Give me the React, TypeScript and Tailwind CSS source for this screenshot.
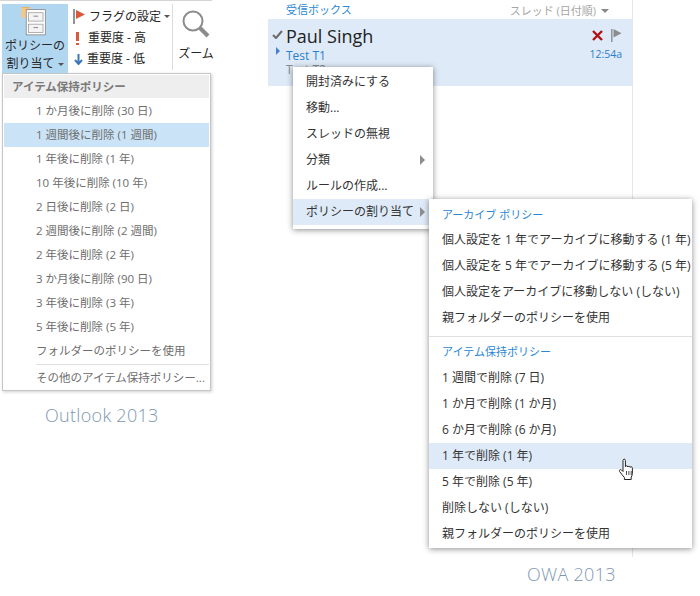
import { Fragment } from 'react';

const jp = 'font-["Open_Sans","Noto_Sans_CJK_JP",sans-serif]';

const outlookItems = [
  '1 か月後に削除 (30 日)',
  '1 週間後に削除 (1 週間)',
  '1 年後に削除 (1 年)',
  '10 年後に削除 (10 年)',
  '2 日後に削除 (2 日)',
  '2 週間後に削除 (2 週間)',
  '2 年後に削除 (2 年)',
  '3 か月後に削除 (90 日)',
  '3 年後に削除 (3 年)',
  '5 年後に削除 (5 年)',
  'フォルダーのポリシーを使用',
];

const contextItems = ['開封済みにする', '移動...', 'スレッドの無視', '分類', 'ルールの作成...', 'ポリシーの割り当て'];

const archiveItems = [
  '個人設定を 1 年でアーカイブに移動する (1 年)',
  '個人設定を 5 年でアーカイブに移動する (5 年)',
  '個人設定をアーカイブに移動しない (しない)',
  '親フォルダーのポリシーを使用',
];

const retentionItems = [
  '1 週間で削除 (7 日)',
  '1 か月で削除 (1 か月)',
  '6 か月で削除 (6 か月)',
  '1 年で削除 (1 年)',
  '5 年で削除 (5 年)',
  '削除しない (しない)',
  '親フォルダーのポリシーを使用',
];

const Cabinet = () => (
  <svg width="36" height="38" viewBox="0 0 36 38" className="block">
    <path d="M0 0h12L6 8 0 0z" fill="#e9b565" />
    <path d="M0 1v13h12V2z" fill="#f2c98a" />
    <rect x="6.5" y="3.5" width="25" height="33" fill="#fff" stroke="#808080" />
    <rect x="9.5" y="7.5" width="19" height="11" fill="#f4f4f4" stroke="#9a9a9a" />
    <rect x="9.5" y="22.5" width="19" height="11" fill="#f4f4f4" stroke="#9a9a9a" />
    <path d="M16 12h6M16 27h6" stroke="#666" />
  </svg>
);

const Chevron = () => <span className="inline-block border-x-[3px] border-t-[3px] border-x-transparent border-t-[#555]" />;

const SubArrow = () => <span className="border-y-[5px] border-l-[5px] border-y-transparent border-l-[#8c8c8c]" />;

const Hand = () => (
  <svg width="18" height="24" viewBox="0 0 18 24" className="absolute left-[189px] top-[259px]">
    <path
      d="M5 2.5c0-1.8 2.4-1.8 2.4 0v6.2c.3-1.3 2.3-1.2 2.4.3.4-1.2 2.2-1 2.3.4.5-1 2.3-.8 2.3.8v5.3c0 1.7-.8 2.6-1.2 3.6v2.4H6.4v-2c-1.4-1.6-3-3.6-4.8-6-.9-1.4.8-2.6 1.9-1.5L5 13.5z"
      fill="#fff"
      stroke="#222"
      strokeWidth="1"
      strokeLinejoin="round"
    />
    <path d="M8.5 13v4M10.9 13v4M13.2 13v4" stroke="#222" strokeWidth=".8" />
  </svg>
);

export default function App() {
  return (
    <div className={`${jp} relative w-[700px] h-[596px] overflow-hidden bg-white flex`}>
      {/* Outlook 2013 */}
      <div className="w-[268px] shrink-0">
        <div className="h-px w-[212px] bg-[#d4d4d4]" />
        <div className="flex h-[72px] pt-[3px] pl-[2px] relative">
          <div className="w-[66px] h-[69px] bg-[#b1d6f0] flex flex-col items-center pt-[3px] text-[12px] leading-[18px] text-[#262626]">
            <Cabinet />
            <span className="mt-[1px] whitespace-nowrap">ポリシーの</span>
            <span className="whitespace-nowrap flex items-center gap-[3px]">割り当て <Chevron /></span>
          </div>
          <div className="w-[105px] flex flex-col pl-[5px] pt-[2px] text-[12px] text-[#262626] border-r border-[#dcdcdc] h-[66px]">
            <div className="flex items-center h-[22px] gap-[3px] whitespace-nowrap">
              <svg width="13" height="15" viewBox="0 0 13 15"><path d="M1 0v15" stroke="#666" strokeWidth="1.4" /><path d="M3 1l9 4.5-9 4.5z" fill="#d9593c" /></svg>
              <span>フラグの設定</span>
              <Chevron />
            </div>
            <div className="flex items-center h-[23px] gap-[9px] whitespace-nowrap pl-[3px]">
              <span className="w-[3px] h-[13px] flex flex-col justify-between items-center">
                <span className="w-[3px] h-[9px] bg-[#d9593c]" />
                <span className="w-[3px] h-[2px] bg-[#d9593c]" />
              </span>
              <span>重要度 - 高</span>
            </div>
            <div className="flex items-center h-[22px] gap-[4px] whitespace-nowrap pl-[1px]">
              <svg width="9" height="11" viewBox="0 0 9 11"><path d="M4.5 0v9M1 6l3.5 4L8 6" fill="none" stroke="#3d78b8" strokeWidth="2" /></svg>
              <span>重要度 - 低</span>
            </div>
          </div>
          <div className="w-[46px] flex flex-col items-center pt-[5px] text-[12px] text-[#262626]">
            <svg width="30" height="30" viewBox="0 0 30 30"><circle cx="12" cy="12" r="9.5" fill="none" stroke="#8c8c8c" strokeWidth="2" /><path d="M19 19l8 8" stroke="#8c8c8c" strokeWidth="4" /></svg>
            <span className="mt-[6px] whitespace-nowrap">ズーム</span>
          </div>
        </div>

        <div className="ml-[2px] w-[209px] h-[318px] bg-white border border-[#c6c6c6] shadow-[1px_1px_3px_rgba(0,0,0,0.2)] p-px text-[11.5px] text-[#6d6d6d]">
          <div className="h-[23px] bg-[#eeeeee] flex items-center pl-[8px] font-bold text-[#7a7a7a]">アイテム保持ポリシー</div>
          <div className="pt-[1px]">
            {outlookItems.map((t, i) => (
              <div key={t} className={`h-[24px] flex items-center pl-[32px] whitespace-nowrap ${i === 1 ? 'bg-[#cbe3f6]' : ''}`}>{t}</div>
            ))}
          </div>
          <div className="h-px bg-[#e1e1e1] ml-[32px] mt-[1px]" />
          <div className="h-[26px] flex items-center pl-[32px] whitespace-nowrap">その他のアイテム保持ポリシー...</div>
        </div>
        <div className="mt-[12px] pl-[45px] text-[18px] leading-[24px] font-light text-[#7e97b1] whitespace-nowrap tracking-[0.3px]">Outlook 2013</div>
      </div>

      {/* OWA 2013 */}
      <div className="relative w-[432px] shrink-0">
        <div className="w-[365px] h-[557px] border-r border-[#e6e6e6]">
          <div className="flex justify-between h-[19px] pt-[3px] pl-[18px] pr-[23px] text-[11px] leading-[14px] whitespace-nowrap">
            <span className="text-[#2b87d3]">受信ボックス</span>
            <span className="text-[#a6a6a6] flex items-center gap-[5px]">
              スレッド (日付順)
              <span className="border-x-[4px] border-t-[4px] border-x-transparent border-t-[#888]" />
            </span>
          </div>
          <div className="h-[67px] bg-[#deeaf8] flex pr-[10px]">
            <div className="w-[18px] flex flex-col items-center pt-[11px]">
              <svg width="11" height="9" viewBox="0 0 11 9"><path d="M1 5l3 3 6-7" fill="none" stroke="#6a6a6a" strokeWidth="2" /></svg>
              <span className="mt-[8px] ml-[2px] border-y-[4px] border-l-[4px] border-y-transparent border-l-[#4a7fd0]" />
            </div>
            <div className="flex-1 whitespace-nowrap">
              <div className="text-[18px] leading-[24px] mt-[5px] text-[#222]">Paul Singh</div>
              <div className="text-[12px] leading-[14px] mt-[1px] text-[#2b7fcf]">Test T1</div>
              <div className="text-[12px] leading-[14px] text-[#8a8a8a]">Test T2</div>
            </div>
            <div className="flex flex-col items-end pt-[10px]">
              <div className="flex items-center gap-[8px] h-[13px]">
                <svg width="11" height="11" viewBox="0 0 11 11"><path d="M1 1l9 9M10 1l-9 9" stroke="#b01116" strokeWidth="2.4" /></svg>
                <svg width="11" height="13" viewBox="0 0 11 13"><path d="M.8 0v13" stroke="#8c8c8c" strokeWidth="1.4" /><path d="M2.5 0l8 4.2-8 4.2z" fill="#8c8c8c" /></svg>
              </div>
              <div className="text-[10.5px] leading-[14px] mt-[5px] text-[#2b7fcf]">12:54a</div>
            </div>
          </div>
        </div>

        {/* context menu */}
        <div className="absolute left-[25px] top-[67px] w-[140px] h-[162px] bg-white shadow-[0_1px_6px_rgba(0,0,0,0.45)] text-[12px] text-[#333] pt-[2px]">
          {contextItems.map((t, i) => (
            <div key={t} className={`h-[26px] flex items-center justify-between pl-[13px] pr-[8px] whitespace-nowrap ${i === 5 ? 'bg-[#deeaf8]' : ''}`}>
              {t}
              {(i === 3 || i === 5) && <SubArrow />}
            </div>
          ))}
        </div>

        {/* policy submenu */}
        <div className="absolute left-[161px] top-[199px] w-[263px] h-[349px] bg-white shadow-[0_1px_6px_rgba(0,0,0,0.45)] text-[12px] text-[#333] whitespace-nowrap">
          <div className="h-[28px] pt-[8px] pl-[13px] text-[11px] leading-[16px] text-[#2b87d3]">アーカイブ ポリシー</div>
          {archiveItems.map((t) => (
            <div key={t} className="h-[26px] flex items-center pl-[13px]">{t}</div>
          ))}
          <div className="h-px bg-[#e0e0e0] mt-[5px]" />
          <div className="h-[28px] pt-[7px] pl-[13px] text-[11px] leading-[16px] text-[#2b87d3]">アイテム保持ポリシー</div>
          {retentionItems.map((t, i) => (
            <Fragment key={t}>
              <div className={`h-[26px] flex items-center pl-[13px] ${i === 3 ? 'bg-[#deeaf8]' : ''}`}>{t}</div>
            </Fragment>
          ))}
          <Hand />
        </div>

        <div className="absolute left-[259px] top-[562px] text-[18px] leading-[24px] font-light text-[#7e97b1] whitespace-nowrap tracking-[0.3px]">OWA 2013</div>
      </div>
    </div>
  );
}
